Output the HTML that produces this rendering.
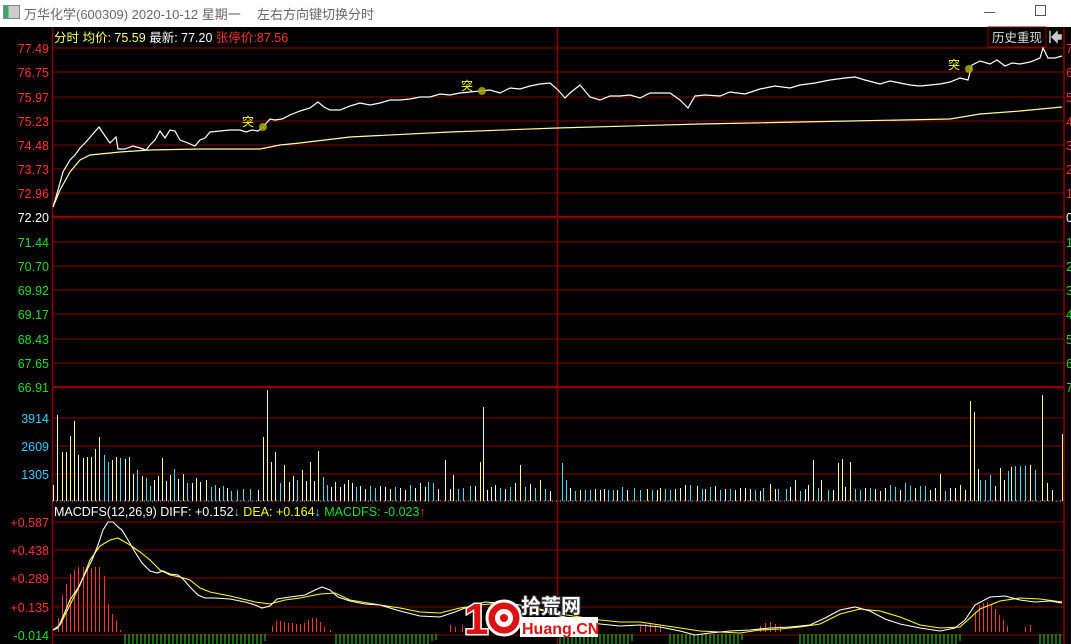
<!DOCTYPE html>
<html><head><meta charset="utf-8"><style>
body{margin:0;width:1071px;height:644px;overflow:hidden;background:#000;font-family:"Liberation Sans","Noto Sans CJK SC",sans-serif;}
#title{position:absolute;left:0;top:0;width:1071px;height:27px;background:#fff;}
svg{position:absolute;left:0;top:0}
</style></head><body>
<div id="title">
<div style="position:absolute;left:3px;top:5px;width:15px;height:12px;border:1px solid #888;background:linear-gradient(90deg,#3a6 0 30%,#ccc 30%)"></div>
<div style="position:absolute;left:24px;top:4px;font-size:13px;color:#666;">万华化学(600309) 2020-10-12 星期一</div>
<div style="position:absolute;left:257px;top:4px;font-size:13px;color:#666;">左右方向键切换分时</div>
<div style="position:absolute;left:984px;top:12px;width:11px;height:1px;background:#555"></div>
<div style="position:absolute;left:1035px;top:5px;width:9px;height:9px;border:1px solid #555"></div>
</div>
<svg width="1071" height="644" viewBox="0 0 1071 644" font-family="Liberation Sans, Noto Sans CJK SC, sans-serif">
<rect x="0" y="27" width="1071" height="617" fill="#000"/>
<g stroke="#8b0000" stroke-width="1">
<path d="M52 48H1064M52 72H1064M52 97H1064M52 121H1064M52 145H1064M52 169H1064M52 193H1064M52 242H1064M52 266H1064M52 290H1064M52 314H1064M52 339H1064M52 363H1064M52 418H1064M52 446H1064M52 474H1064M52 501H1064M52 522H1064M52 550H1064M52 578H1064M52 607H1064M52 635H1064"/>
<path d="M52 217H1064M52 387H1064" stroke-width="2.5"/>
<path d="M52.5 27V644M1064 27V644M557.5 27V644" stroke-width="1.5"/>
</g>
<g font-size="12.5" text-anchor="end">
<text x="49" y="53" fill="#f33">77.49</text><text x="49" y="77" fill="#f33">76.75</text><text x="49" y="102" fill="#f33">75.97</text><text x="49" y="126" fill="#f33">75.23</text><text x="49" y="150" fill="#f33">74.48</text><text x="49" y="174" fill="#f33">73.73</text><text x="49" y="198" fill="#f33">72.96</text>
<text x="49" y="222" fill="#fff">72.20</text>
<text x="49" y="247" fill="#2d2">71.44</text><text x="49" y="271" fill="#2d2">70.70</text><text x="49" y="295" fill="#2d2">69.92</text><text x="49" y="319" fill="#2d2">69.17</text><text x="49" y="344" fill="#2d2">68.43</text><text x="49" y="368" fill="#2d2">67.65</text><text x="49" y="392" fill="#2d2">66.91</text>
<text x="49" y="423" fill="#3cf">3914</text><text x="49" y="451" fill="#3cf">2609</text><text x="49" y="479" fill="#3cf">1305</text>
<text x="49" y="527" fill="#f33">+0.587</text><text x="49" y="555" fill="#f33">+0.438</text><text x="49" y="583" fill="#f33">+0.289</text><text x="49" y="612" fill="#f33">+0.135</text><text x="49" y="640" fill="#2d2">-0.014</text>
</g>
<g font-size="12.5">
<text x="1066" y="53" fill="#f33">7</text><text x="1066" y="77" fill="#f33">6</text><text x="1066" y="102" fill="#f33">5</text><text x="1066" y="126" fill="#f33">4</text><text x="1066" y="150" fill="#f33">3</text><text x="1066" y="174" fill="#f33">2</text><text x="1066" y="198" fill="#f33">1</text><text x="1066" y="222" fill="#fff">0</text>
<text x="1066" y="247" fill="#2d2">1</text><text x="1066" y="271" fill="#2d2">2</text><text x="1066" y="295" fill="#2d2">3</text><text x="1066" y="319" fill="#2d2">4</text><text x="1066" y="344" fill="#2d2">5</text><text x="1066" y="368" fill="#2d2">6</text><text x="1066" y="392" fill="#2d2">7</text>
</g>
<text x="54" y="42" font-size="12.5"><tspan fill="#ff6">分时 均价:</tspan><tspan fill="#ff6"> 75.59 </tspan><tspan fill="#fff">最新: 77.20 </tspan><tspan fill="#f33">张停价:87.56</tspan></text>
<rect x="988" y="27" width="58" height="20" fill="#000" stroke="#8b0000"/>
<text x="992" y="42" font-size="12.5" fill="#ddd">历史重现</text>
<path d="M1050 31V43M1052 37L1057 32V35H1061V39H1057V42Z" stroke="#ccc" fill="#ccc" stroke-width="1.5"/>
<polyline fill="none" stroke="#ff9" stroke-width="1.2" points="53,207 60,190 70,172 80,160 90,155 100,154 120,152 150,150 200,149 260,149 280,145 300,143 350,137 450,132 557,128 700,124 850,121 950,119 980,114 1020,111 1062,107"/>
<polyline fill="none" stroke="#fff" stroke-width="1.2" points="53,207 58,190 63,172 70,160 75,155 80,148 85,143 92,135 99,127 105,136 110,143 116,137 118,149 125,149 133,146 140,148 146,150 150,145 155,140 160,131 165,138 170,130 175,131 180,140 188,143 195,146 200,140 205,138 210,132 220,131 230,130 240,130 246,132 252,130 258,131 262,128 270,119 275,120 282,119 290,115 300,111 310,108 318,102 324,107 330,110 340,110 350,106 360,103 370,105 380,103 390,100 400,100 410,99 420,97 430,97 440,94 450,95 460,93 470,92 480,91 490,90 500,93 510,88 520,89 530,86 540,84 550,83 558,90 565,98 570,93 580,85 590,97 600,100 610,96 620,96 630,95 640,98 650,93 660,93 670,93 680,100 688,108 695,96 705,95 720,96 730,92 745,94 760,89 775,86 790,88 800,85 815,83 830,80 845,78 855,77 865,80 880,84 890,81 900,83 910,85 920,86 930,85 940,84 950,82 960,78 968,80 972,65 980,61 990,64 997,60 1005,66 1012,63 1020,64 1030,62 1040,58 1043,48 1048,58 1055,58 1062,56"/>
<g font-size="12" fill="#ff0"><text x="242" y="126">突</text><text x="461" y="90">突</text><text x="948" y="69">突</text></g>
<g fill="#aa0" fill-opacity=".85"><circle cx="263" cy="127" r="4"/><circle cx="482" cy="91" r="4"/><circle cx="969" cy="69" r="4"/></g>
<path stroke="#ff9" stroke-width="1" d="M57.5 501V415M62.5 501V452M66.5 501V452M70.5 501V436M74.5 501V421M87.5 501V457M91.5 501V457M95.5 501V449M99.5 501V437M112.5 501V460M116.5 501V457M129.5 501V457M133.5 501V474M142.5 501V476M162.5 501V458M170.5 501V475M183.5 501V474M196.5 501V478M206.5 501V480M263.5 501V437M267.5 501V390M271.5 501V462M275.5 501V452M284.5 501V465M289.5 501V482M302.5 501V470M310.5 501V462M318.5 501V451M335.5 501V482M348.5 501V480M390.5 501V489M420.5 501V483M445.5 501V460M453.5 501V475M480.5 501V462M483.5 501V407M491.5 501V487M520.5 501V465M540.5 501V480M580.5 501V490M600.5 501V490M617.5 501V490M647.5 501V489M660.5 501V488M680.5 501V488M697.5 501V486M770.5 501V484M795.5 501V480M813.5 501V460M821.5 501V480M838.5 501V463M842.5 501V459M850.5 501V462M880.5 501V491M915.5 501V488M930.5 501V490M940.5 501V474M960.5 501V485M970.5 501V401M974.5 501V412M995.5 501V486M1000.5 501V468M1011.5 501V467M1030.5 501V465M1042.5 501V395M1047.5 501V483M1062.5 501V434"/>
<path stroke="#4de" stroke-width="1" d="M104.5 501V455M108.5 501V462M120.5 501V458M137.5 501V470M146.5 501V478M150.5 501V486M174.5 501V469M187.5 501V483M211.5 501V487M215.5 501V485M223.5 501V486M231.5 501V491M237.5 501V490M243.5 501V489M250.5 501V489M280.5 501V483M297.5 501V480M323.5 501V477M327.5 501V485M356.5 501V487M370.5 501V486M375.5 501V488M395.5 501V487M410.5 501V485M428.5 501V482M433.5 501V483M458.5 501V489M463.5 501V488M470.5 501V486M500.5 501V488M510.5 501V487M525.5 501V487M535.5 501V488M545.5 501V489M562.5 501V463M566.5 501V480M575.5 501V491M585.5 501V490M590.5 501V490M608.5 501V490M613.5 501V490M622.5 501V487M634.5 501V488M640.5 501V490M652.5 501V490M665.5 501V489M670.5 501V490M690.5 501V485M702.5 501V489M710.5 501V487M720.5 501V490M730.5 501V489M755.5 501V490M763.5 501V488M778.5 501V489M786.5 501V489M800.5 501V491M818.5 501V488M828.5 501V490M855.5 501V489M860.5 501V490M870.5 501V488M890.5 501V485M895.5 501V487M905.5 501V483M910.5 501V486M920.5 501V486M925.5 501V486M945.5 501V491M980.5 501V480M985.5 501V480M990.5 501V475M1008.5 501V471M1015.5 501V466M1020.5 501V466M1025.5 501V466M1035.5 501V470"/>
<path stroke="#fff" stroke-width="1" d="M53.5 501V485M78.5 501V455M83.5 501V458M125.5 501V459M154.5 501V480M158.5 501V476M166.5 501V481M178.5 501V479M192.5 501V483M200.5 501V482M219.5 501V488M227.5 501V488M258.5 501V490M293.5 501V476M306.5 501V481M314.5 501V481M331.5 501V487M340.5 501V487M344.5 501V484M352.5 501V483M360.5 501V486M365.5 501V489M380.5 501V486M385.5 501V487M400.5 501V488M405.5 501V490M415.5 501V488M425.5 501V487M438.5 501V489M450.5 501V489M475.5 501V486M487.5 501V490M495.5 501V485M505.5 501V489M515.5 501V483M530.5 501V484M550.5 501V491M570.5 501V488M595.5 501V489M604.5 501V489M627.5 501V490M657.5 501V490M675.5 501V489M685.5 501V485M705.5 501V489M715.5 501V486M725.5 501V489M735.5 501V490M740.5 501V488M745.5 501V488M750.5 501V489M760.5 501V491M775.5 501V489M790.5 501V487M805.5 501V489M808.5 501V485M833.5 501V490M845.5 501V487M865.5 501V488M875.5 501V489M885.5 501V488M900.5 501V490M935.5 501V488M950.5 501V488M955.5 501V488M965.5 501V490M978.5 501V469M1004.5 501V480M1052.5 501V490"/>
<path d="M52 501H1064" stroke="#4de" stroke-dasharray="1 3"/>
<text x="54" y="516" font-size="12.5"><tspan fill="#fff">MACDFS(12,26,9) DIFF: +0.152</tspan><tspan fill="#4de">↓</tspan><tspan fill="#ff0"> DEA: +0.164</tspan><tspan fill="#4de">↓</tspan><tspan fill="#2d2"> MACDFS: -0.023</tspan><tspan fill="#f22">↑</tspan></text>
<path stroke="#f33" stroke-width="1" d="M58.5 632V618M62.5 632V595M66.5 632V584M70.5 632V574M74.5 632V570M78.5 632V567M83.5 632V567M87.5 632V569M91.5 632V568M95.5 632V567M99.5 632V567M104.5 632V576M108.5 632V604M112.5 632V614M116.5 632V620M120.5 632V630M272.5 632V626M276.5 632V621M280.5 632V621M284.5 632V622M288.5 632V623M292.5 632V623M296.5 632V624M300.5 632V624M304.5 632V623M308.5 632V620M312.5 632V618M316.5 632V618M320.5 632V622M324.5 632V627M330.5 632V630M450.5 632V625M455.5 632V627M462.5 632V625M640.5 632V626M645.5 632V624M650.5 632V623M655.5 632V625M660.5 632V626M760.5 632V626M765.5 632V623M770.5 632V622M775.5 632V624M780.5 632V626M975.5 632V612M979.5 632V605M983.5 632V603M987.5 632V602M991.5 632V604M995.5 632V609M999.5 632V615M1003.5 632V620M1007.5 632V626M1025.5 632V627M1030.5 632V625"/>
<path stroke="#2d2" stroke-width="1" d="M125 634V644M129 634V644M133 634V644M137 634V644M141 634V644M145 634V644M149 634V644M153 634V644M157 634V644M161 634V644M165 634V644M169 634V644M173 634V644M177 634V644M181 634V644M185 634V644M189 634V644M193 634V644M197 634V644M201 634V644M205 634V644M209 634V644M213 634V644M217 634V644M221 634V644M225 634V644M229 634V644M233 634V644M237 634V644M241 634V644M245 634V644M249 634V644M253 634V644M257 634V644M261 634V644M265 634V641M336 634V644M340 634V644M344 634V644M348 634V644M352 634V644M356 634V644M360 634V644M364 634V644M368 634V644M372 634V644M376 634V644M380 634V644M384 634V644M388 634V644M392 634V644M396 634V644M400 634V644M404 634V644M408 634V644M412 634V644M416 634V644M420 634V644M424 634V644M428 634V644M432 634V641M436 634V640M560 634V644M564 634V644M568 634V644M572 634V644M576 634V644M580 634V644M584 634V644M588 634V644M592 634V644M596 634V644M600 634V644M604 634V644M608 634V644M612 634V644M616 634V644M620 634V644M624 634V644M628 634V644M632 634V641M670 634V644M674 634V644M678 634V644M682 634V644M686 634V644M690 634V644M694 634V644M698 634V644M702 634V644M706 634V644M710 634V644M714 634V644M718 634V644M722 634V644M726 634V644M730 634V644M734 634V644M738 634V644M742 634V640M800 634V644M804 634V644M808 634V644M812 634V644M816 634V644M820 634V644M824 634V644M828 634V644M832 634V644M836 634V644M840 634V644M844 634V644M848 634V644M852 634V644M856 634V644M860 634V644M864 634V644M868 634V644M872 634V644M876 634V644M880 634V644M884 634V644M888 634V644M892 634V644M896 634V644M900 634V644M904 634V644M908 634V644M912 634V644M916 634V644M920 634V644M924 634V644M928 634V644M932 634V644M936 634V644M940 634V644M944 634V644M948 634V644M952 634V644M956 634V644M960 634V641M1040 634V644M1044 634V644M1048 634V644M1052 634V644M1056 634V644M1060 634V644"/>
<polyline fill="none" stroke="#ff0" stroke-width="1.1" points="53,630 60,625 70,605 80,585 90,560 100,546 110,540 118,538 130,545 140,552 150,560 160,570 170,575 180,577 190,580 200,588 210,592 230,596 255,602 270,604 285,600 300,598 320,594 335,593 350,600 380,605 400,608 420,612 440,613 460,608 480,605 500,603 520,605 540,609 560,614 580,617 600,620 620,622 640,622 660,625 680,628 700,631 720,632 740,633 760,630 780,629 800,627 820,624 840,614 860,609 880,611 900,617 920,625 940,628 960,627 980,609 1000,601 1020,598 1040,599 1062,602"/>
<polyline fill="none" stroke="#fff" stroke-width="1.1" points="53,630 58,628 65,612 70,600 78,588 85,574 92,560 98,545 103,530 108,522 113,522 118,527 122,530 128,540 135,552 142,563 150,571 157,573 163,571 170,574 178,575 183,579 190,587 198,595 205,598 215,598 230,599 245,602 255,605 262,608 270,606 277,599 290,597 305,595 315,590 322,587 330,590 338,597 350,601 365,604 380,605 400,611 420,616 440,617 455,612 470,606 485,602 500,603 520,605 540,610 560,616 580,620 600,624 620,626 640,625 660,627 680,631 695,635 710,633 730,631 750,630 770,628 790,627 810,625 825,618 840,610 855,607 870,611 885,619 900,624 920,628 940,631 955,628 965,620 975,605 990,597 1005,596 1020,600 1035,602 1050,601 1062,603"/>
<g font-weight="bold">
<text x="464" y="634" font-size="44" fill="#d11" stroke="#fff" stroke-width="3" paint-order="stroke" font-family="Liberation Sans, sans-serif">1</text>
<circle cx="504" cy="618" r="17" fill="#d11" stroke="#fff" stroke-width="3"/>
<circle cx="504" cy="618" r="9" fill="#fff"/><circle cx="504" cy="618" r="4" fill="#d11"/>
<text x="521" y="613" font-size="20" fill="#fff" stroke="#333" stroke-width="2" paint-order="stroke" font-family="Noto Sans CJK SC, sans-serif">拾荒网</text>
<rect x="520" y="617" width="78" height="20" fill="#fff"/>
<text x="522" y="634" font-size="16" fill="#d11" font-family="Liberation Sans, sans-serif">Huang.CN</text>
</g>
</svg>
</body></html>
